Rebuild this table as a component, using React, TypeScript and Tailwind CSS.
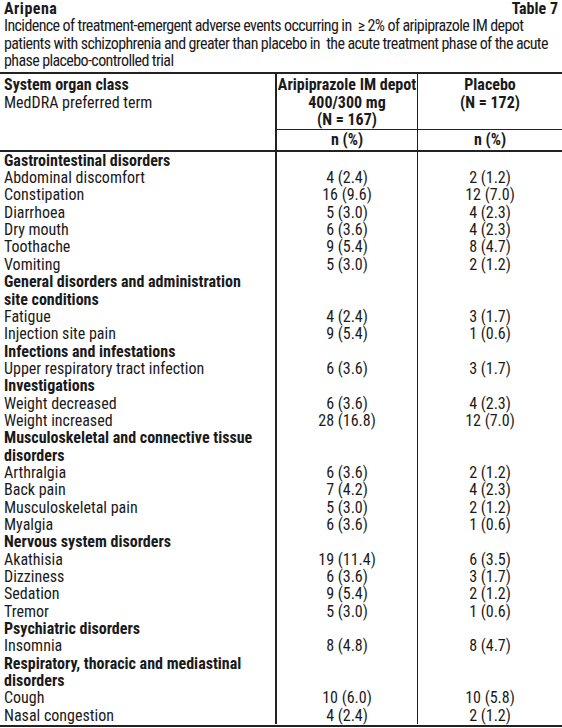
type Row = [string, string, string];

interface Section {
  title: string[];
  rows: Row[];
}

const sections: Section[] = [
  {
    title: ["Gastrointestinal disorders"],
    rows: [
      ["Abdominal discomfort", "4 (2.4)", "2 (1.2)"],
      ["Constipation", "16 (9.6)", "12 (7.0)"],
      ["Diarrhoea", "5 (3.0)", "4 (2.3)"],
      ["Dry mouth", "6 (3.6)", "4 (2.3)"],
      ["Toothache", "9 (5.4)", "8 (4.7)"],
      ["Vomiting", "5 (3.0)", "2 (1.2)"],
    ],
  },
  {
    title: ["General disorders and administration", "site conditions"],
    rows: [
      ["Fatigue", "4 (2.4)", "3 (1.7)"],
      ["Injection site pain", "9 (5.4)", "1 (0.6)"],
    ],
  },
  {
    title: ["Infections and infestations"],
    rows: [["Upper respiratory tract infection", "6 (3.6)", "3 (1.7)"]],
  },
  {
    title: ["Investigations"],
    rows: [
      ["Weight decreased", "6 (3.6)", "4 (2.3)"],
      ["Weight increased", "28 (16.8)", "12 (7.0)"],
    ],
  },
  {
    title: ["Musculoskeletal and connective tissue", "disorders"],
    rows: [
      ["Arthralgia", "6 (3.6)", "2 (1.2)"],
      ["Back pain", "7 (4.2)", "4 (2.3)"],
      ["Musculoskeletal pain", "5 (3.0)", "2 (1.2)"],
      ["Myalgia", "6 (3.6)", "1 (0.6)"],
    ],
  },
  {
    title: ["Nervous system disorders"],
    rows: [
      ["Akathisia", "19 (11.4)", "6 (3.5)"],
      ["Dizziness", "6 (3.6)", "3 (1.7)"],
      ["Sedation", "9 (5.4)", "2 (1.2)"],
      ["Tremor", "5 (3.0)", "1 (0.6)"],
    ],
  },
  {
    title: ["Psychiatric disorders"],
    rows: [["Insomnia", "8 (4.8)", "8 (4.7)"]],
  },
  {
    title: ["Respiratory, thoracic and mediastinal", "disorders"],
    rows: [
      ["Cough", "10 (6.0)", "10 (5.8)"],
      ["Nasal congestion", "4 (2.4)", "2 (1.2)"],
    ],
  },
];

const grid = "grid grid-cols-[275px_142px_1fr]";

export default function App() {
  return (
    <div className="w-[562px] bg-white text-[#1a1a1a] text-[16px] leading-[17.35px] whitespace-nowrap font-['Liberation_Sans_Narrow','Roboto_Condensed','Arial_Narrow','DejaVu_Sans_Condensed',sans-serif]">
      {/* caption */}
      <div className="px-[4px] pb-[3px]">
        <div className="flex justify-between font-bold">
          <span className="tracking-[0.5px]">Aripena</span>
          <span>Table 7</span>
        </div>
        <p className="tracking-[-0.6px]">
          Incidence of treatment-emergent adverse events occurring in&nbsp; ≥ 2% of aripiprazole IM depot
          <br />
          patients with schizophrenia and greater than placebo in&nbsp; the acute treatment phase of the acute
          <br />
          phase placebo-controlled trial
        </p>
      </div>

      {/* table head */}
      <div className={`${grid} border-t-2 border-b-2 border-[#222]`}>
        <div className="px-[4px] pt-[2px]">
          <div className="font-bold">System organ class</div>
          <div>MedDRA preferred term</div>
        </div>
        <div className="border-l-2 border-[#222] flex flex-col">
          <div className="text-center font-bold pt-[2px] pb-[1px] border-b border-[#222]">
            Aripiprazole IM depot
            <br />
            400/300 mg
            <br />
            (N = 167)
          </div>
          <div className="text-center font-bold py-[1px]">n (%)</div>
        </div>
        <div className="border-l border-[#222] flex flex-col">
          <div className="flex-1 text-center font-bold pt-[2px] border-b border-[#222]">
            Placebo
            <br />
            (N = 172)
          </div>
          <div className="text-center font-bold py-[1px]">n (%)</div>
        </div>
      </div>

      {/* body */}
      <div className="border-b-2 border-[#222] pb-[1px]">
        {sections.map((s) => (
          <div key={s.title[0]}>
            {s.title.map((t) => (
              <div key={t} className={grid}>
                <div className="px-[4px] font-bold">{t}</div>
                <div className="border-l-2 border-[#222]" />
                <div className="border-l border-[#222]" />
              </div>
            ))}
            {s.rows.map(([name, a, b]) => (
              <div key={name} className={grid}>
                <div className="px-[4px]">{name}</div>
                <div className="border-l-2 border-[#222] text-center">{a}</div>
                <div className="border-l border-[#222] text-center">{b}</div>
              </div>
            ))}
          </div>
        ))}
      </div>
    </div>
  );
}
